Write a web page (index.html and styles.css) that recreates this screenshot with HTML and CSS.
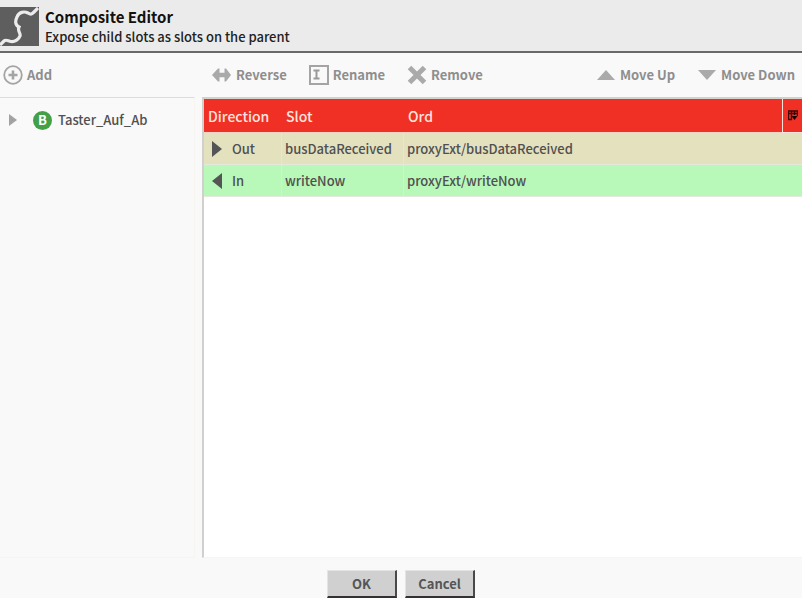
FILE: index.html
```html
<!DOCTYPE html>
<html lang="en">
<head>
<meta charset="utf-8">
<title>Composite Editor</title>
<link rel="stylesheet" href="styles.css">
</head>
<body>
<div class="editor">
  <header class="header">
    <svg class="logo" viewBox="0 0 39 39" aria-hidden="true">
      <rect width="39" height="39" fill="#5e5e5e"/>
      <path d="M0 38L4 34C6 32 8 34 11 34.500C15 35 19 32 20 29C21 26 17 24 19 20C15 18 15 14 17 10C19 5 24 4 28 6C31 8 32 7 34 5L38 1" fill="none" stroke="#ececec" stroke-width="3.2"/>
    </svg>
    <div>
      <h1 class="title">Composite Editor</h1>
      <p class="subtitle">Expose child slots as slots on the parent</p>
    </div>
  </header>
  <main class="panes">
    <section class="side">
      <div class="toolbar">
        <button class="tool" type="button">
          <svg class="icon" viewBox="0 0 20 20" aria-hidden="true"><g fill="none" stroke="#a4a4a4"><circle cx="10" cy="10" r="8.8" stroke-width="1.8"/><path d="M10 5.5v9M5.5 10h9" stroke-width="2.6"/></g></svg>
          Add
        </button>
      </div>
      <ul class="tree">
        <li class="node">
          <svg class="twisty" viewBox="0 0 8 12" aria-hidden="true"><path d="M0 0L8 6L0 12Z" fill="#a2a2a2"/></svg>
          <span class="badge">B</span>
          <span>Taster_Auf_Ab</span>
        </li>
      </ul>
    </section>
    <section class="content">
      <div class="toolbar toolbar-wide">
        <button class="tool" type="button">
          <svg class="icon" viewBox="0 0 20 20" aria-hidden="true"><path d="M0 10L6 3.500H7.500V7.800H12.500V3.500H14L19 10L14 16.500H12.500V12.200H7.500V16.500H6Z" fill="#aaa"/></svg>
          Reverse
        </button>
        <button class="tool" type="button">
          <svg class="icon" viewBox="0 0 20 20" aria-hidden="true"><rect x="1" y="1" width="18" height="18" fill="none" stroke="#a4a4a4" stroke-width="2"/><path d="M4.500 5.500H10.500M7.500 5V14M4.500 13.500H10.500" stroke="#999" stroke-width="2"/></svg>
          Rename
        </button>
        <button class="tool" type="button">
          <svg class="icon" viewBox="0 0 20 20" aria-hidden="true"><path d="M2.500 2.500L17.500 17.500M17.500 2.500L2.500 17.500" stroke="#aaa" stroke-width="5"/></svg>
          Remove
        </button>
        <button class="tool move-up" type="button">
          <svg class="icon" viewBox="0 0 20 20" aria-hidden="true"><path d="M1 15L10 5L19 15Z" fill="#aaa"/></svg>
          Move Up
        </button>
        <button class="tool" type="button">
          <svg class="icon" viewBox="0 0 20 20" aria-hidden="true"><path d="M1 5H19L10 15Z" fill="#aaa"/></svg>
          Move Down
        </button>
      </div>
      <div class="table-box">
        <table class="slots">
          <colgroup><col class="col-direction"><col class="col-slot"><col><col class="col-menu"></colgroup>
          <thead>
            <tr>
              <th>Direction</th><th>Slot</th><th>Ord</th>
              <th class="menu-cell">
                <button class="menu" type="button" aria-label="Table options">
                  <svg class="menu-icon" viewBox="0 0 10 11" aria-hidden="true"><path d="M.5 9.500V1H9.500V6M0 3.500H10M3.500 1V9.500M6.500 1V5M0 9.500H4" fill="none" stroke="#3a0806" stroke-width="1.400"/><path d="M3.500 6H9.500L6.500 10Z" fill="#200"/></svg>
                </button>
              </th>
            </tr>
          </thead>
          <tbody>
            <tr class="out">
              <td><span class="direction"><svg class="arrow" viewBox="0 0 10 16" aria-hidden="true"><path d="M0 0L10 8L0 16Z" fill="#555"/></svg>Out</span></td>
              <td>busDataReceived</td><td colspan="2">proxyExt/busDataReceived</td>
            </tr>
            <tr class="in">
              <td><span class="direction"><svg class="arrow" viewBox="0 0 10 16" aria-hidden="true"><path d="M10 0L0 8L10 16Z" fill="#555"/></svg>In</span></td>
              <td>writeNow</td><td colspan="2">proxyExt/writeNow</td>
            </tr>
          </tbody>
        </table>
      </div>
    </section>
  </main>
  <footer class="footer">
    <button class="action" type="button">OK</button>
    <button class="action" type="button">Cancel</button>
  </footer>
</div>
</body>
</html>
```
FILE: styles.css
```css
* { box-sizing: border-box; }

body {
  margin: 0;
  background: #f9f9f9;
  color: #505050;
  font: 500 13px/20px "Noto Sans CJK SC", "Noto Sans", sans-serif;
}

button { font: inherit; }

.editor {
  display: flex;
  flex-direction: column;
  height: 100vh;
}

.header {
  display: flex;
  align-items: flex-start;
  gap: 6px;
  padding: 7px 0 4px;
  background: #ebebeb;
  border-bottom: 2px solid #696969;
}

.logo { width: 39px; height: 39px; }

.title {
  margin: 0;
  color: #111;
  font-size: 15px;
  font-weight: 700;
  line-height: 20px;
}

.subtitle { margin: 0; color: #222; }

.panes {
  display: grid;
  grid-template-columns: 195px 1fr;
  column-gap: 7px;
  flex: 1;
  min-height: 0;
}

.side, .content {
  display: flex;
  flex-direction: column;
  min-width: 0;
}

.toolbar {
  display: flex;
  align-items: center;
  height: 44px;
  padding: 0 3px;
}

.toolbar-wide { gap: 22px; padding: 0 7px 0 10px; }

.tool {
  display: flex;
  align-items: center;
  gap: 4px;
  padding: 0;
  border: 0;
  background: none;
  color: #8e8e8e;
  font-weight: 700;
  white-space: nowrap;
}

.icon { width: 20px; height: 20px; }

.move-up { margin-left: auto; }

.tree {
  flex: 1;
  margin: 0;
  padding: 12px 9px;
  border-top: 1px solid #deded2;
  border-right: 1px solid #f8f4ef;
  border-bottom: 1px solid #f8f4ef;
  list-style: none;
}

.node { display: flex; align-items: center; }

.twisty { width: 8px; height: 12px; margin-right: 16px; }

.badge {
  width: 19px;
  height: 19px;
  margin-right: 6px;
  border-radius: 50%;
  background: #43a047;
  color: #fff;
  font-weight: 700;
  line-height: 18px;
  text-align: center;
}

.table-box {
  flex: 1;
  border-top: 2px solid #d2d2cc;
  border-left: 2px solid #d2d0cc;
  border-bottom: 1px solid #f8f4ef;
  background: #fff;
}

.slots {
  width: 100%;
  border-collapse: separate;
  border-spacing: 0;
  table-layout: fixed;
}

.col-direction { width: 78px; }
.col-slot { width: 122px; }
.col-menu { width: 20px; }

.slots th {
  height: 34px;
  padding: 0 4px;
  border-bottom: 1px solid #f3d4c8;
  background: #f03024;
  color: #ffe4dd;
  font-size: 14px;
  font-weight: 500;
  text-align: left;
}

.slots td {
  height: 32px;
  padding: 0 3px;
  border-bottom: 1px solid #e5e8dc;
  border-right: 1px solid #e4e5dc;
}

.slots td:last-child { border-right: 0; }

.out { background: #e4e1bf; }
.in { background: #b8f8b9; }

.direction {
  display: flex;
  align-items: center;
  gap: 10px;
  padding-left: 5px;
}

.arrow { width: 10px; height: 16px; }

.slots .menu-cell {
  padding: 0;
  border: 1px solid #ffe4dd;
  border-right: 0;
  border-top: 0;
}

.menu {
  display: flex;
  justify-content: center;
  width: 100%;
  padding: 0;
  border: 0;
  background: none;
}

.menu-icon { width: 10px; height: 11px; }

.footer {
  display: flex;
  justify-content: center;
  gap: 8px;
  height: 40px;
  padding-top: 12px;
}

.action {
  min-width: 70px;
  height: 28px;
  padding: 0 12px;
  border: 1px solid #e4e4e4;
  border-right: 2px solid #4a484a;
  border-bottom: 2px solid #343034;
  background: #d0d0d0;
  color: #555;
  font-weight: 700;
}
```
